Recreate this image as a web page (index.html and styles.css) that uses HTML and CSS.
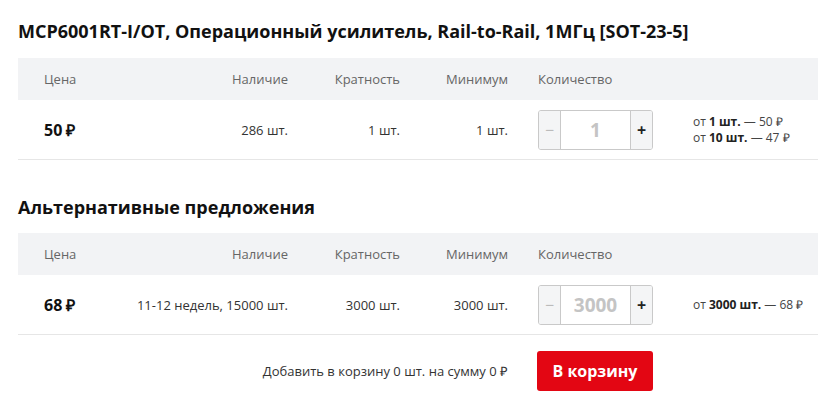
FILE: index.html
```html
<!DOCTYPE html>
<html lang="ru">
<head>
    <meta charset="UTF-8">
    <title>MCP6001RT-I/OT</title>
    <link rel="stylesheet" href="styles.css">
</head>
<body>
    <div class="product">
        <h1 class="title">MCP6001RT-I/OT, Операционный усилитель, Rail-to-Rail, 1МГц [SOT-23-5]</h1>

        <!-- Основное предложение -->
        <div class="offers">
            <div class="row head">
                <div class="cell price">Цена</div>
                <div class="cell num">Наличие</div>
                <div class="cell num">Кратность</div>
                <div class="cell num">Минимум</div>
                <div class="cell qty">Количество</div>
                <div class="cell tiers"></div>
            </div>
            <div class="row item">
                <div class="cell price"><b>50 ₽</b></div>
                <div class="cell num">286 шт.</div>
                <div class="cell num">1 шт.</div>
                <div class="cell num">1 шт.</div>
                <div class="cell qty">
                    <div class="counter">
                        <span class="btn minus">−</span>
                        <span class="value">1</span>
                        <span class="btn plus">+</span>
                    </div>
                </div>
                <div class="cell tiers">
                    <div>от <b>1 шт.</b> — 50 ₽</div>
                    <div>от <b>10 шт.</b> — 47 ₽</div>
                </div>
            </div>
        </div>

        <h2 class="subtitle">Альтернативные предложения</h2>

        <div class="offers">
            <div class="row head">
                <div class="cell price">Цена</div>
                <div class="cell num">Наличие</div>
                <div class="cell num">Кратность</div>
                <div class="cell num">Минимум</div>
                <div class="cell qty">Количество</div>
                <div class="cell tiers"></div>
            </div>
            <div class="row item">
                <div class="cell price"><b>68 ₽</b></div>
                <div class="cell num">11-12 недель, 15000 шт.</div>
                <div class="cell num">3000 шт.</div>
                <div class="cell num">3000 шт.</div>
                <div class="cell qty">
                    <div class="counter">
                        <span class="btn minus">−</span>
                        <span class="value">3000</span>
                        <span class="btn plus">+</span>
                    </div>
                </div>
                <div class="cell tiers">
                    <div>от <b>3000 шт.</b> — 68 ₽</div>
                </div>
            </div>
        </div>

        <!-- Итог -->
        <div class="cart">
            <span class="total">Добавить в корзину 0 шт. на сумму 0 ₽</span>
            <button class="to-cart">В корзину</button>
        </div>
    </div>
</body>
</html>
```

FILE: styles.css
```css
/* Общие стили */
body {
    margin: 0;
    font-family: "Open Sans", Arial, sans-serif;
    color: #333;
    background: #fff;
}

.product {
    margin-left: 18px;
    width: 800px;
    padding-top: 19px;
}

.title, .subtitle {
    margin: 0;
    font-size: 18px;
    font-weight: 700;
    line-height: 24px;
    color: #111;
}

.subtitle {
    margin-top: 35px;
}

/* Таблица предложений */
.offers {
    margin-top: 14px;
}

.title + .offers {
    margin-top: 15px;
}

.row {
    display: grid;
    grid-template-columns: 100px 170px 112px 108px 145px 1fr;
    align-items: center;
    white-space: nowrap;
}

.row.head {
    height: 42px;
    background-color: #f2f3f5;
    font-size: 13px;
    color: #666;
}

.row.item {
    height: 59px;
    border-bottom: 1px solid #e6e6e6;
    font-size: 13px;
    color: #333;
}

.cell.price {
    padding-left: 26px;
}

.cell.price b {
    font-size: 16px;
    font-weight: 700;
    color: #111;
}

.cell.num {
    text-align: right;
}

.cell.qty {
    padding-left: 30px;
}

.cell.tiers {
    padding-left: 40px;
    font-size: 12px;
    line-height: 16px;
    color: #444;
}

.cell.tiers b {
    color: #222;
}

/* Счётчик количества */
.counter {
    display: flex;
    width: 113px;
    height: 38px;
    border: 1px solid #c9c9c9;
    border-radius: 3px;
    overflow: hidden;
}

.counter .btn {
    width: 21px;
    display: flex;
    align-items: center;
    justify-content: center;
    background-color: #f4f5f6;
    font-size: 16px;
    font-weight: 700;
    color: #222;
}

.counter .minus {
    border-right: 1px solid #c9c9c9;
    color: #bbb;
    font-weight: 400;
}

.counter .plus {
    border-left: 1px solid #c9c9c9;
}

.counter .value {
    flex: 1;
    display: flex;
    align-items: center;
    justify-content: center;
    font-size: 19px;
    font-weight: 700;
    color: #c4c4c4;
}

/* Корзина */
.cart {
    display: flex;
    align-items: center;
    margin-top: 16px;
}

.total {
    width: 490px;
    text-align: right;
    font-size: 13px;
    color: #333;
}

.to-cart {
    margin-left: 29px;
    width: 116px;
    height: 40px;
    border: none;
    border-radius: 3px;
    background-color: #e30613;
    color: #fff;
    font-family: "Open Sans", Arial, sans-serif;
    font-size: 16px;
    font-weight: 700;
    cursor: pointer;
}
```
